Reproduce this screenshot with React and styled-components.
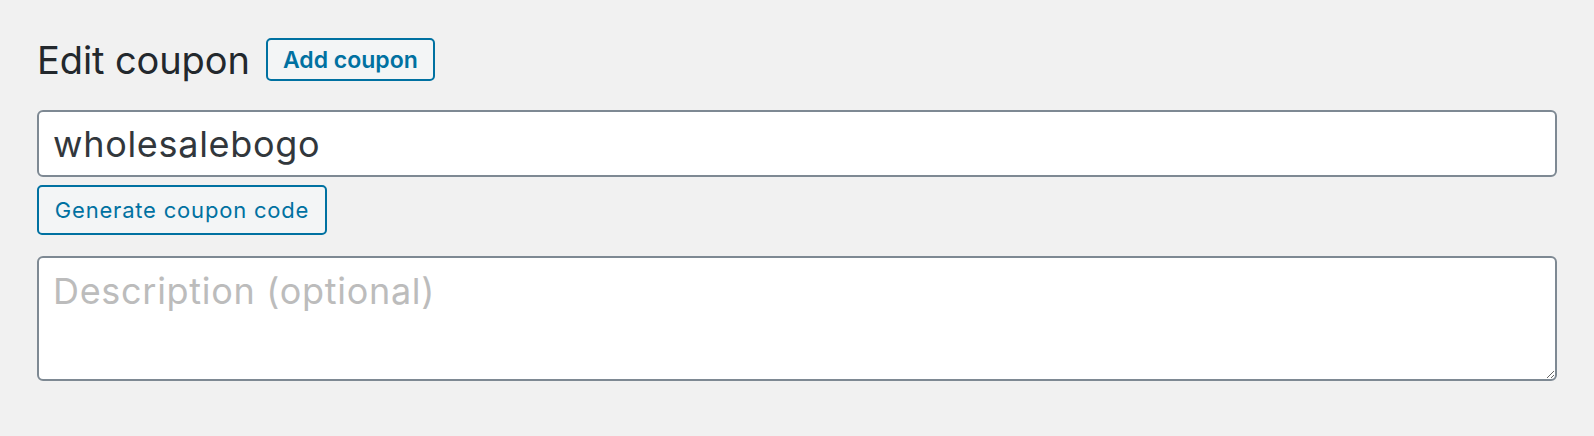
import React from "react";
import styled, { createGlobalStyle } from "styled-components";

const Global = createGlobalStyle`
  html, body { margin: 0; padding: 0; background: #f1f1f1; }
  body { font-family: Inter, "Noto Sans", sans-serif; color: #23282d; }
  * { box-sizing: border-box; }
`;

const Page = styled.div`
  padding: 38px 37px 0 37px;
  display: flex;
  flex-direction: column;
`;

const TitleRow = styled.div`
  display: flex;
  align-items: center;
  gap: 16px;
  height: 43px;
`;

const Heading = styled.h1`
  margin: 0;
  font-size: 38px;
  font-weight: 400;
  line-height: 1;
  color: #23282d;
  letter-spacing: -0.1px;
`;

const Button = styled.button`
  font-family: inherit;
  background: #f3f5f6;
  color: #0071a1;
  border: 2px solid #0071a1;
  border-radius: 5px;
  cursor: pointer;
  display: inline-flex;
  align-items: center;
  justify-content: center;
  height: ${(p) => p.$h}px;
  width: ${(p) => p.$w}px;
  font-size: ${(p) => p.$fs}px;
  font-weight: ${(p) => p.$fw || 400};
  letter-spacing: ${(p) => p.$ls || 0}px;
  padding: 0;
`;

const TitleInput = styled.input`
  margin-top: 29px;
  width: 100%;
  height: 67px;
  border: 2px solid #7e8993;
  border-radius: 6px;
  background: #fff;
  font-family: inherit;
  font-size: 36px;
  letter-spacing: 0.7px;
  color: #32373c;
  padding: 0 14px;
  outline: none;
`;

const GenRow = styled.div`
  margin-top: 8px;
  display: flex;
`;

const Description = styled.textarea`
  margin-top: 21px;
  width: 100%;
  height: 125px;
  border: 2px solid #7e8993;
  border-radius: 6px;
  background: #fff;
  font-family: inherit;
  font-size: 36px;
  letter-spacing: 0.7px;
  line-height: 1.2;
  padding: 12px 14px 8px;
  color: #32373c;
  outline: none;
  &::placeholder { color: #bcbcbc; }
`;

export default function App() {
  return (
    <>
      <Global />
      <Page>
        <TitleRow>
          <Heading>Edit coupon</Heading>
          <Button $h={43} $w={169} $fs={23} $fw={600}>Add coupon</Button>
        </TitleRow>
        <TitleInput defaultValue="wholesalebogo" />
        <GenRow>
          <Button $h={50} $w={290} $fs={22} $ls={0.8}>Generate coupon code</Button>
        </GenRow>
        <Description placeholder="Description (optional)" />
      </Page>
    </>
  );
}
